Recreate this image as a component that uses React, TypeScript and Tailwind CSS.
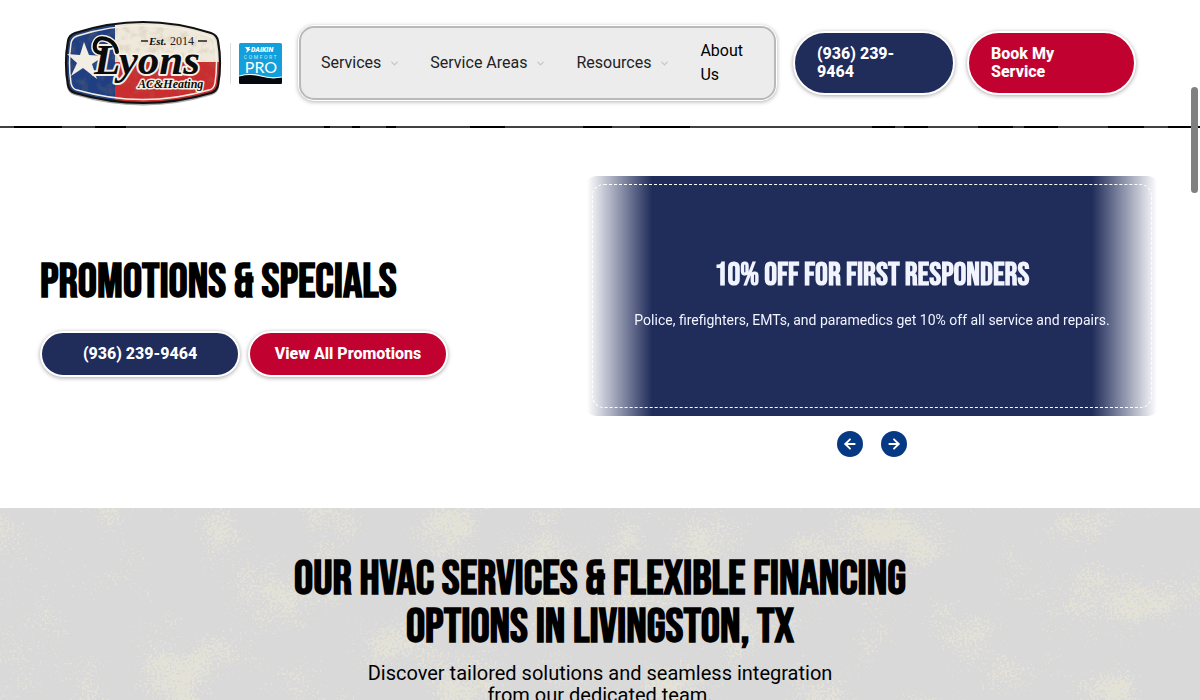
import React from "react";
import { ArrowLeft, ArrowRight, ChevronDown } from "lucide-react";

const display = "font-['Bebas_Neue','Liberation_Sans_Narrow',sans-serif] font-bold uppercase";

const pill =
  "flex items-center rounded-full border-2 border-white font-extrabold leading-[18px] text-white shadow-[0_1px_4px_rgba(0,0,0,0.35)]";

function LyonsLogo() {
  return (
    <svg viewBox="0 0 158 86" className="h-[86px] w-[158px]" role="img" aria-label="Lyons AC & Heating">
      <defs>
        <clipPath id="badge">
          <path d="M11 13Q79-9 147 13Q153 15 154 21Q158 43 154 65Q153 71 147 73Q79 93 11 73Q5 71 4 65Q0 43 4 21Q5 15 11 13Z" />
        </clipPath>
        <filter id="worn" x="0" y="0" width="100%" height="100%">
          <feTurbulence type="fractalNoise" baseFrequency="0.12" numOctaves="4" seed="4" />
          <feColorMatrix values="0 0 0 0 0.35  0 0 0 0 0.25  0 0 0 0 0.12  1.6 0 0 0 -0.7" />
        </filter>
      </defs>
      <path
        d="M10 14Q79-9 148 14Q154 16 155 22Q159 44 155 67Q154 73 148 75Q79 96 10 75Q4 73 3 67Q-1 44 3 22Q4 16 10 14Z"
        fill="#aaa"
      />
      <g clipPath="url(#badge)">
        <rect width="158" height="86" fill="#efe9dc" />
        <rect width="51" height="86" fill="#203f82" />
        <rect x="51" y="42" width="107" height="44" fill="#ca2c2f" />
        <rect width="158" height="86" filter="url(#worn)" opacity="0.35" />
      </g>
      <path
        d="M13 16Q79-5 145 16Q150 18 151 23Q154 43 151 63Q150 69 145 70Q79 89 13 70Q8 69 7 63Q4 43 7 23Q8 18 13 16Z"
        fill="none"
        stroke="#f3eee3"
        strokeWidth="1.5"
      />
      <path
        d="M11 13Q79-9 147 13Q153 15 154 21Q158 43 154 65Q153 71 147 73Q79 93 11 73Q5 71 4 65Q0 43 4 21Q5 15 11 13Z"
        fill="none"
        stroke="#111"
        strokeWidth="2.2"
      />
      <path d="M20 22L25 35L40 36L28 44L33 59L19 48L7 56L13 43L3 34L16 35Z" fill="#f2eee4" />
      <path
        d="M39 33Q29 33 31 24Q34 15 45 20Q52 24 53 32"
        fill="none"
        stroke="#f5f0e6"
        strokeWidth="7"
        strokeLinecap="round"
      />
      <g fontFamily="Liberation Serif, serif" fontStyle="italic" fontWeight="700" fill="#0b0b0b">
        <text x="30" y="54" fontSize="43" stroke="#f5f0e6" strokeWidth="4" strokeLinejoin="round" paintOrder="stroke">
          Lyons
        </text>
        <text x="74" y="68" fontSize="12" stroke="#f5f0e6" strokeWidth="3" strokeLinejoin="round" paintOrder="stroke">
          AC&amp;Heating
        </text>
        <text x="85" y="25" fontSize="11">
          Est.
        </text>
      </g>
      <path
        d="M39 33Q29 33 31 24Q34 15 45 20Q52 24 53 32"
        fill="none"
        stroke="#0b0b0b"
        strokeWidth="4"
        strokeLinecap="round"
      />
      <text x="106" y="25" fontSize="12" fontFamily="Liberation Serif, serif" fill="#222">
        2014
      </text>
      <path d="M77 21H84M134 21H143" stroke="#222" strokeWidth="1.3" />
    </svg>
  );
}

function DaikinLogo() {
  return (
    <svg viewBox="0 0 43 41" className="h-[41px] w-[43px]" role="img" aria-label="Daikin Comfort Pro">
      <rect width="43" height="41" rx="1.5" fill="#129fdc" />
      <path d="M0 33Q12 30 22 33T43 34V39.5Q43 41 41.5 41H1.5Q0 41 0 39.5Z" fill="#05080c" />
      <path d="M0 33Q12 30 22 33T43 34" fill="none" stroke="#fff" strokeWidth="1.2" />
      <path d="M6 4H11L10 6H12L7 10L8 7Z" fill="#fff" />
      <text x="12" y="9" fontSize="7" fontWeight="900" fontStyle="italic" fontFamily="Roboto, sans-serif" fill="#fff">
        DAIKIN
      </text>
      <text x="22" y="16" textAnchor="middle" fontSize="5" letterSpacing="1.6" fontFamily="Roboto, sans-serif" fill="#c9ecfb">
        COMFORT
      </text>
      <text x="22" y="30" textAnchor="middle" fontSize="16" fontFamily="Lato, sans-serif" fill="#fff">
        PRO
      </text>
    </svg>
  );
}

function NavItem({ label }: { label: string }) {
  return (
    <button type="button" className="flex items-center gap-2 whitespace-nowrap text-[#222]">
      {label}
      <ChevronDown className="size-[11px] text-[#c4c4c4]" strokeWidth={2.5} />
    </button>
  );
}

function GrungeTexture() {
  return (
    <svg className="absolute inset-0 h-full w-full" aria-hidden="true">
      <filter id="grunge" x="0" y="0" width="100%" height="100%" colorInterpolationFilters="sRGB">
        <feTurbulence type="fractalNoise" baseFrequency="0.014 0.016" numOctaves="4" seed="21" />
        <feColorMatrix values="1 0 0 0 0  0 0 0 0 0  0 0 0 0 0  0 0 0 0 1" result="patches" />
        <feTurbulence type="fractalNoise" baseFrequency="0.4" numOctaves="3" seed="8" />
        <feColorMatrix values="1 0 0 0 0  0 0 0 0 0  0 0 0 0 0  0 0 0 0 1" result="grain" />
        <feComposite in="patches" in2="grain" operator="arithmetic" k2="0.55" k3="0.45" />
        <feColorMatrix values="0 0 0 0 0.9  0 0 0 0 0.894  0 0 0 0 0.845  16 0 0 0 -9.2" />
      </filter>
      <rect width="100%" height="100%" filter="url(#grunge)" opacity="0.9" />
    </svg>
  );
}

export default function App() {
  return (
    <div className="relative flex h-screen flex-col overflow-hidden bg-white font-[Roboto,sans-serif] text-base text-black">
      <header className="flex h-[126px] shrink-0 items-center px-16">
        <a href="#home" className="shrink-0">
          <LyonsLogo />
        </a>
        <a href="#daikin" className="ml-2 shrink-0 border-l border-[#ddd] pl-2">
          <DaikinLogo />
        </a>
        <nav className="ml-4 flex flex-1 items-center rounded-2xl border border-white bg-white shadow-[0_1px_4px_rgba(0,0,0,0.3)]">
          <div className="flex flex-1 items-center gap-[30px] rounded-[15px] border-2 border-[#b9b9b9] bg-[#ececec] py-[11px] pl-5">
            <NavItem label="Services" />
            <NavItem label="Service Areas" />
            <NavItem label="Resources" />
            <a href="#about" className="w-12 leading-6">
              About Us
            </a>
          </div>
        </nav>
        <div className="ml-4 flex shrink-0 gap-3">
          <a href="tel:9362399464" className={`${pill} h-16 w-[162px] bg-[#202c5a] pl-[22px] pr-10`}>
            (936) 239-9464
          </a>
          <a href="#book" className={`${pill} h-16 w-[169px] bg-[#c10230] pl-[22px] pr-16`}>
            Book My Service
          </a>
        </div>
      </header>

      <svg className="h-[2px] w-full shrink-0" aria-hidden="true">
        <rect width="100%" height="2" fill="#000" />
        <path
          d="M0 1H14M62 1H95M126 1H324M330 1H352M360 1H386M396 1H470M505 1H583M612 1H640M690 1H872M895 1H904M928 1H978M1013 1H1024M1058 1H1108M1144 1H1168"
          stroke="#454040"
          strokeWidth="2"
        />
      </svg>

      <section className="grid shrink-0 grid-cols-[17fr_18fr] items-center px-10 pb-[51px] pt-12">
        <div className="pt-[3px]">
          <h2 className={`${display} whitespace-nowrap text-5xl leading-[48px]`}>Promotions &amp; Specials</h2>
          <div className="mt-6 flex gap-2">
            <a href="tel:9362399464" className={`${pill} h-[46px] w-[200px] justify-center bg-[#202c5a]`}>
              (936) 239-9464
            </a>
            <a href="#promotions" className={`${pill} h-[46px] w-[200px] justify-center bg-[#c10230]`}>
              View All Promotions
            </a>
          </div>
        </div>
        <div>
          <article className="h-60 rounded-xl bg-[#202c5a] p-2 text-[#f1f4ff] [mask-image:linear-gradient(to_right,transparent_3px,#000_68px,#000_calc(100%-68px),transparent_calc(100%-3px))]">
            <div className="flex h-full flex-col items-center justify-center rounded-xl border border-dashed border-white pb-[2px] text-center">
              <h3 className={`${display} text-[32px] leading-8`}>10% off for first responders</h3>
              <p className="mt-[18px] text-sm leading-5">
                Police, firefighters, EMTs, and paramedics get 10% off all service and repairs.
              </p>
            </div>
          </article>
          <div className="mt-[15px] flex justify-center gap-[18px]">
            <button type="button" aria-label="Previous promotion" className="flex size-[26px] items-center justify-center rounded-full bg-[#063984] text-white">
              <ArrowLeft className="size-4" strokeWidth={2.75} />
            </button>
            <button type="button" aria-label="Next promotion" className="flex size-[26px] items-center justify-center rounded-full bg-[#063984] text-white">
              <ArrowRight className="size-4" strokeWidth={2.75} />
            </button>
          </div>
        </div>
      </section>

      <section className="relative flex-1 bg-[#d9d9d9] pt-12 text-center">
        <GrungeTexture />
        <div className="relative">
          <h2 className={`${display} text-5xl leading-[48px]`}>
            Our HVAC services &amp; flexible financing
            <br />
            options in Livingston, TX
          </h2>
          <p className="mx-auto mt-[10px] max-w-[500px] text-xl leading-[22px]">
            Discover tailored solutions and seamless integration from our dedicated team.
          </p>
        </div>
      </section>

      <div className="absolute right-[2px] top-[87px] h-[106px] w-[7px] rounded-full bg-[#808080]" />
    </div>
  );
}
